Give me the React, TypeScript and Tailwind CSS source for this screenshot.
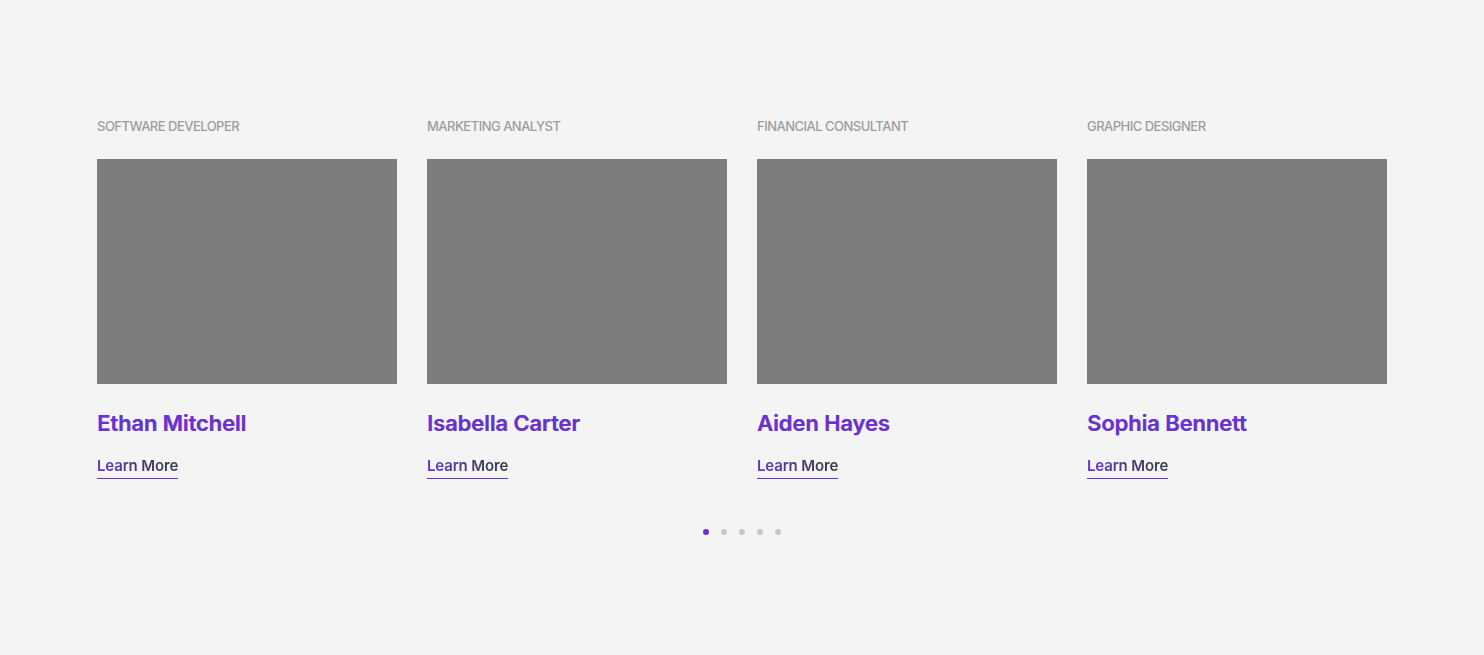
const people = [
  { role: "Software Developer", name: "Ethan Mitchell" },
  { role: "Marketing Analyst", name: "Isabella Carter" },
  { role: "Financial Consultant", name: "Aiden Hayes" },
  { role: "Graphic Designer", name: "Sophia Bennett" },
];

export default function App() {
  return (
    <div className="min-h-[655px] bg-[#f4f4f4] font-['Inter',sans-serif]">
      <div className="mx-auto w-[1290px] pt-[118px]">
        <div className="grid grid-cols-4 gap-[30px]">
          {people.map((p) => (
            <div key={p.name}>
              <p className="text-[13px] leading-4 font-medium uppercase tracking-[-0.04em] text-[#9d9d9d]">
                {p.role}
              </p>
              <div className="mt-[25px] h-[225px] bg-[#7b7c7e]" />
              <h3 className="mt-[25px] text-[22px] leading-7 font-semibold tracking-[-0.005em] text-[#6a30d4] [text-shadow:0.6px_0_0_rgba(50,40,80,0.55)]">
                {p.name}
              </h3>
              <a
                href="#"
                className="mt-[19px] inline-block border-b border-[#6a30d4] pb-[2px] text-[15px] leading-5 font-semibold tracking-[-0.01em] bg-gradient-to-r from-[#6a30d4] via-[#4a3a78] to-[#3a3a44] bg-clip-text text-transparent"
              >
                Learn More
              </a>
            </div>
          ))}
        </div>
        <div className="mt-[50px] flex justify-center gap-3">
          <span className="h-1.5 w-1.5 rounded-full bg-[#6a30d4]" />
          <span className="h-1.5 w-1.5 rounded-full bg-[#c8c8c8]" />
          <span className="h-1.5 w-1.5 rounded-full bg-[#c8c8c8]" />
          <span className="h-1.5 w-1.5 rounded-full bg-[#c8c8c8]" />
          <span className="h-1.5 w-1.5 rounded-full bg-[#c8c8c8]" />
        </div>
      </div>
    </div>
  );
}
